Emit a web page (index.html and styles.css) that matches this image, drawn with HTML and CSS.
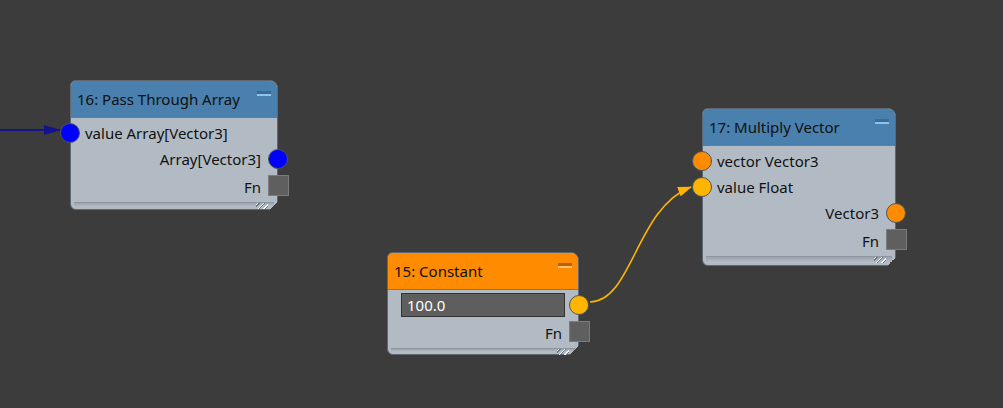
FILE: index.html
```html
<!DOCTYPE html>
<html lang="en">
<head>
    <meta charset="UTF-8">
    <title>Node Graph</title>
    <link rel="stylesheet" href="styles.css">
</head>
<body>
    <div class="canvas">
        <svg class="wires" width="1003" height="408" viewBox="0 0 1003 408">
            <defs>
                <marker id="arrow-blue" markerWidth="17" markerHeight="10" refX="16" refY="5" orient="auto" markerUnits="userSpaceOnUse">
                    <path d="M0 0 L17 5 L0 10 Z" fill="#13138c"/>
                </marker>
                <marker id="arrow-yellow" markerWidth="14" markerHeight="10" refX="13" refY="5" orient="auto" markerUnits="userSpaceOnUse">
                    <path d="M0 0 L14 5 L0 10 Z" fill="#ffb400"/>
                </marker>
            </defs>
            <!-- incoming array wire -->
            <path d="M0 130 L60 130" stroke="#13138c" stroke-width="2.2" fill="none" marker-end="url(#arrow-blue)"/>
            <!-- constant -> multiply value -->
            <path d="M590 302 C632 302, 636 208, 691 187" stroke="#ffb400" stroke-width="1.6" fill="none" marker-end="url(#arrow-yellow)"/>
        </svg>

        <div class="node node-pass">
            <div class="node-head">
                <span>16: Pass Through Array</span>
                <span class="min"></span>
            </div>
            <div class="node-body">
                <div class="row">
                    <span class="port port-in blue"></span>
                    value Array[Vector3]
                </div>
                <div class="row out">
                    Array[Vector3]
                    <span class="port port-out blue"></span>
                </div>
                <div class="row out fn-row">
                    Fn
                    <span class="fn"></span>
                </div>
            </div>
            <div class="node-foot"><span class="grip"></span></div>
        </div>

        <div class="node node-const">
            <div class="node-head orange-head">
                <span>15: Constant</span>
                <span class="min"></span>
            </div>
            <div class="node-body">
                <div class="row field-row">
                    <div class="field">100.0</div>
                    <span class="port port-out yellow"></span>
                </div>
                <div class="row out fn-row">
                    Fn
                    <span class="fn"></span>
                </div>
            </div>
            <div class="node-foot"><span class="grip"></span></div>
        </div>

        <div class="node node-mult">
            <div class="node-head">
                <span>17: Multiply Vector</span>
                <span class="min"></span>
            </div>
            <div class="node-body">
                <div class="row">
                    <span class="port port-in orange"></span>
                    vector Vector3
                </div>
                <div class="row">
                    <span class="port port-in yellow"></span>
                    value Float
                </div>
                <div class="row out">
                    Vector3
                    <span class="port port-out orange"></span>
                </div>
                <div class="row out fn-row">
                    Fn
                    <span class="fn"></span>
                </div>
            </div>
            <div class="node-foot"><span class="grip"></span></div>
        </div>
    </div>
</body>
</html>
```

FILE: styles.css
```css
* {
    margin: 0;
    padding: 0;
    box-sizing: border-box;
}

body {
    background: #3c3c3c;
    font-family: 'Noto Sans', 'Open Sans', sans-serif;
    font-size: 15px;
    color: #111;
    overflow: hidden;
}

.canvas {
    position: relative;
    width: 1003px;
    height: 408px;
}

.wires {
    position: absolute;
    left: 0;
    top: 0;
}

/* nodes sit on a free canvas */
.node {
    position: absolute;
    background: #b2bbc4;
    border: 1px solid #5d6873;
    border-radius: 6px 8px 0 6px;
    display: flex;
    flex-direction: column;
}

.node::after {
    content: '';
    position: absolute;
    right: -1px;
    bottom: -1px;
    width: 9px;
    height: 9px;
    background: linear-gradient(135deg, transparent 50%, #3c3c3c 50%);
}

.node-pass {
    left: 70px;
    top: 80px;
    width: 208px;
    height: 130px;
}

.node-const {
    left: 387px;
    top: 252px;
    width: 192px;
    height: 103px;
}

.node-mult {
    left: 702px;
    top: 108px;
    width: 194px;
    height: 158px;
}

.node-head {
    height: 37px;
    flex-shrink: 0;
    background: #4a80ad;
    border-radius: 5px 7px 0 0;
    border-bottom: 1px solid #6e7c88;
    display: flex;
    align-items: center;
    justify-content: space-between;
    padding: 0 6px 0 6px;
    color: #101010;
}

.orange-head {
    background: #ff8c00;
}

.min {
    width: 14px;
    height: 5px;
    background: #3d6a92;
    border-bottom: 2px solid #8cc4f0;
    align-self: flex-start;
    margin-top: 10px;
}

.orange-head .min {
    background: #b86200;
    border-bottom-color: #ffc27a;
}

.node-body {
    padding-top: 2px;
}

.row {
    position: relative;
    height: 26px;
    display: flex;
    align-items: center;
    padding: 0 16px 0 14px;
}

.row.out {
    justify-content: flex-end;
}

.row.fn-row {
    height: 29px;
}

.port {
    position: absolute;
    width: 20px;
    height: 20px;
    border-radius: 50%;
    border: 1px solid #4a5560;
    top: 3px;
}

.port-in {
    left: -11px;
}

.port-out {
    right: -11px;
}

.blue {
    background: #0000ff;
}

.orange {
    background: #ff8c00;
}

.yellow {
    background: #ffb400;
}

.fn {
    position: absolute;
    right: -12px;
    top: 3px;
    width: 21px;
    height: 21px;
    background: #5f5f5f;
    border: 1px solid #7a7d80;
}

.field-row {
    padding: 0 13px;
}

.field {
    width: 100%;
    height: 24px;
    background: #5e5e5e;
    border: 1px solid #333;
    color: #fff;
    padding-left: 5px;
    line-height: 22px;
}

.node-foot {
    flex: 1;
    padding: 1px 3px 2px;
    display: flex;
}

.grip {
    flex: 1;
    border-radius: 0 0 3px 3px;
    background: linear-gradient(#9aa3ad, #b8c1ca);
    border-top: 1px solid #8d96a0;
    position: relative;
}

.grip::after {
    content: '';
    position: absolute;
    right: 6px;
    top: 0;
    width: 12px;
    height: 6px;
    background: repeating-linear-gradient(135deg, transparent 0 1px, #eef2f5 1px 2px, #6d7680 2px 3px, transparent 3px 4px);
}
```
